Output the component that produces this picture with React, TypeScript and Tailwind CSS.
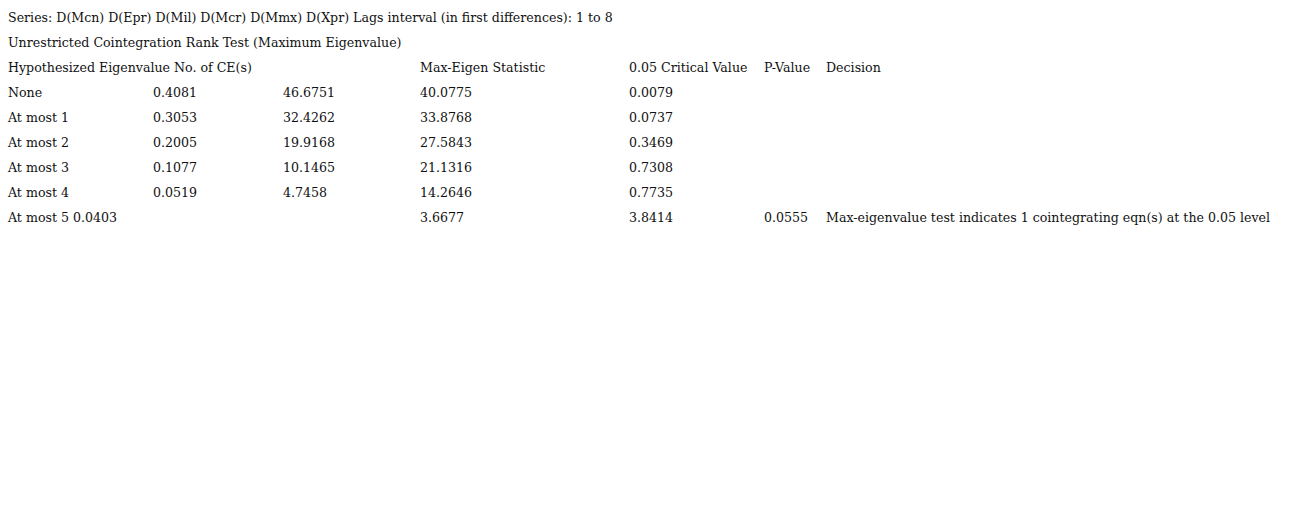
const cols = ['w-[145px]', 'w-[130px]', 'w-[137px]', 'w-[209px]', 'w-[135px]', 'w-[62px]', 'flex-1'];

type Cell = { text: string; span?: number };

const rows: Cell[][] = [
  [{ text: 'None' }, { text: '0.4081' }, { text: '46.6751' }, { text: '40.0775' }, { text: '0.0079' }],
  [{ text: 'At most 1' }, { text: '0.3053' }, { text: '32.4262' }, { text: '33.8768' }, { text: '0.0737' }],
  [{ text: 'At most 2' }, { text: '0.2005' }, { text: '19.9168' }, { text: '27.5843' }, { text: '0.3469' }],
  [{ text: 'At most 3' }, { text: '0.1077' }, { text: '10.1465' }, { text: '21.1316' }, { text: '0.7308' }],
  [{ text: 'At most 4' }, { text: '0.0519' }, { text: '4.7458' }, { text: '14.2646' }, { text: '0.7735' }],
];

function Row({ cells }: { cells: Cell[] }) {
  let i = 0;
  return (
    <div className="flex h-[25px] items-center whitespace-nowrap">
      {cells.map((c, k) => {
        const start = i;
        i += c.span ?? 1;
        if ((c.span ?? 1) > 1) {
          const w = [145, 130, 137, 209, 135, 62].slice(start, i).reduce((a, b) => a + b, 0);
          return (
            <div key={k} className="shrink-0" style={{ width: w }}>
              {c.text}
            </div>
          );
        }
        return (
          <div key={k} className={`${cols[start]} shrink-0`}>
            {c.text}
          </div>
        );
      })}
    </div>
  );
}

export default function App() {
  return (
    <div className="min-h-screen bg-white px-[8px] pt-[6px] text-[12.6px] text-[#111] font-['DejaVu_Serif',serif]">
      <div className="flex h-[25px] items-center whitespace-nowrap">
        Series: D(Mcn) D(Epr) D(Mil) D(Mcr) D(Mmx) D(Xpr) Lags interval (in first differences): 1 to 8
      </div>
      <div className="flex h-[25px] items-center whitespace-nowrap">
        Unrestricted Cointegration Rank Test (Maximum Eigenvalue)
      </div>
      <Row
        cells={[
          { text: 'Hypothesized Eigenvalue No. of CE(s)', span: 3 },
          { text: 'Max-Eigen Statistic' },
          { text: '0.05 Critical Value' },
          { text: 'P-Value' },
          { text: 'Decision' },
        ]}
      />
      {rows.map((r, k) => (
        <Row key={k} cells={r} />
      ))}
      <Row
        cells={[
          { text: 'At most 5 0.0403', span: 3 },
          { text: '3.6677' },
          { text: '3.8414' },
          { text: '0.0555' },
          { text: 'Max-eigenvalue test indicates 1 cointegrating eqn(s) at the 0.05 level' },
        ]}
      />
    </div>
  );
}
